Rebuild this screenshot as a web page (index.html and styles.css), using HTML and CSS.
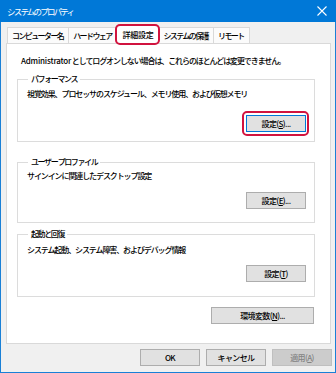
FILE: index.html
```html
<!DOCTYPE html>
<html lang="ja">
<head>
	<meta charset="UTF-8">
	<meta name="viewport" content="width=device-width, initial-scale=1.0">
	<title>システムのプロパティ</title>
	<link rel="stylesheet" href="styles.css">
</head>
<body>
	<div class="window">
		<div class="titlebar">
			<span class="title">システムのプロパティ</span>
			<svg class="close" width="10" height="10" viewBox="0 0 10 10">
				<path d="M0.5 0.5 L9.5 9.5 M9.5 0.5 L0.5 9.5" stroke="#fff" stroke-width="1.1" fill="none"/>
			</svg>
		</div>

		<div class="tabs">
			<div class="tab">コンピューター名</div>
			<div class="tab">ハードウェア</div>
			<div class="tab active mark">詳細設定</div>
			<div class="tab">システムの保護</div>
			<div class="tab">リモート</div>
		</div>

		<div class="panel">
			<p class="note"><span class="latin">Administrator</span> としてログオンしない場合は、これらのほとんどは変更できません。</p>

			<fieldset class="group perf">
				<legend>パフォーマンス</legend>
				<p>視覚効果、プロセッサのスケジュール、メモリ使用、および仮想メモリ</p>
				<div class="actions">
					<button class="btn focus mark">設定(<u>S</u>)...</button>
				</div>
			</fieldset>

			<fieldset class="group profile">
				<legend>ユーザー プロファイル</legend>
				<p>サインインに関連したデスクトップ設定</p>
				<div class="actions">
					<button class="btn">設定(<u>E</u>)...</button>
				</div>
			</fieldset>

			<fieldset class="group startup">
				<legend>起動と回復</legend>
				<p>システム起動、システム障害、およびデバッグ情報</p>
				<div class="actions">
					<button class="btn">設定(<u>T</u>)</button>
				</div>
			</fieldset>

			<div class="actions env">
				<button class="btn wide">環境変数(<u>N</u>)...</button>
			</div>
		</div>

		<div class="footer">
			<button class="btn">OK</button>
			<button class="btn">キャンセル</button>
			<button class="btn" disabled>適用(<u>A</u>)</button>
		</div>
	</div>
</body>
</html>
```

FILE: styles.css
```css
* {
	box-sizing: border-box;
	margin: 0;
	padding: 0;
}

body {
	font-family: "Noto Sans CJK JP", "Noto Sans", sans-serif;
	font-size: 8px;
	font-weight: 500;
	letter-spacing: -1.1px;
	color: #000;
	background: #fff;
}

.latin {
	letter-spacing: -0.2px;
}

.window {
	width: 336px;
	height: 373px;
	display: flex;
	flex-direction: column;
	background: #f0f0f0;
	border: 1px solid #1a80d6;
	border-top: 0;
}

.titlebar {
	height: 22px;
	margin: 0 -1px;
	padding: 0 8px 0 7px;
	display: flex;
	align-items: center;
	justify-content: space-between;
	background: #0078d7;
	color: #fff;
	font-size: 8.5px;
	font-weight: 400;
	letter-spacing: -1.8px;
}

.close {
	display: block;
	margin-right: 1px;
}

/* tabs */
.tabs {
	display: flex;
	align-items: flex-end;
	margin-top: 5px;
	padding-left: 6px;
	height: 16px;
}

.tab {
	height: 16px;
	padding: 0 5px 0 4px;
	line-height: 15px;
	background: #fbfbfb;
	border: 1px solid #d9d9d9;
	border-bottom: 0;
	margin-right: -1px;
	white-space: nowrap;
	letter-spacing: -1.6px;
}

.tab.active {
	margin: 0 -1px -1px -1px;
	padding: 0 5px 0 6px;
	height: 19px;
	line-height: 18px;
	background: #fff;
	letter-spacing: -0.3px;
	z-index: 1;
}

.mark {
	position: relative;
}

.mark::after {
	content: "";
	position: absolute;
	inset: -2px -2px -1px -2px;
	border: 2px solid #d1133f;
	border-radius: 5px;
	pointer-events: none;
}

.btn.mark::after {
	inset: -5px -4px -5px -5px;
}

/* panel */
.panel {
	margin: 0 4px 0 5px;
	height: 301px;
	background: #fff;
	border: 1px solid #d9d9d9;
	padding: 10px 15px 0 10px;
}

.note {
	margin-left: 4px;
	line-height: 14px;
	white-space: nowrap;
}

.group {
	border: 1px solid #dcdcdc;
	padding: 0 8px 0 8px;
	min-width: 0;
}

.group legend {
	margin-left: 2px;
	padding: 0 3px 0 3px;
	line-height: 12px;
	letter-spacing: -1.4px;
}

.group p {
	margin-left: 1px;
	line-height: 14px;
	white-space: nowrap;
}

.actions {
	display: flex;
	justify-content: flex-end;
}

.perf {
	margin-top: 5px;
	padding-top: 2px;
	padding-bottom: 9px;
}

.perf .actions {
	margin-top: 14px;
}

.profile {
	margin-top: 14px;
	padding-top: 1px;
	padding-bottom: 13px;
}

.profile .actions {
	margin-top: 9px;
}

.startup {
	margin-top: 5px;
	padding-top: 3px;
	padding-bottom: 14px;
}

.startup .actions {
	margin-top: 8px;
}

.env {
	margin-top: 10px;
	margin-right: 1px;
}

/* buttons */
.btn {
	width: 60px;
	height: 17px;
	font: inherit;
	letter-spacing: -0.6px;
	background: #e1e1e1;
	border: 1px solid #adadad;
	color: #000;
	line-height: 14px;
}

.btn.wide {
	width: 103px;
}

.btn.focus {
	border-color: #0078d7;
}

.btn:disabled {
	background: #cccccc;
	border-color: #bfbfbf;
	color: #838383;
}

.footer {
	display: flex;
	justify-content: flex-end;
	gap: 6px;
	padding: 5px 3px 0 0;
}
```
